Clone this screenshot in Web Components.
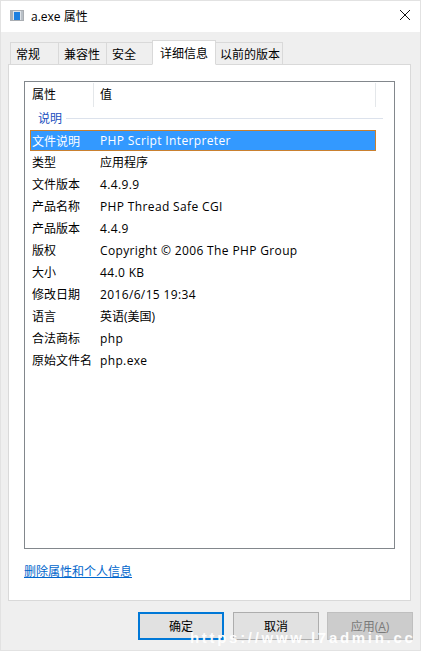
<!DOCTYPE html>
<html><head><meta charset="utf-8"><style>
html,body{margin:0;padding:0;background:#f0f0f0}
body{font:12px "Open Sans","Noto Sans CJK SC",sans-serif;color:#000}
</style></head><body>
<props-window>
  <title-bar slot="title">a.exe 属性</title-bar>
  <tab-strip slot="tabs">
    <tab-item w="48">常规</tab-item><tab-item w="48">兼容性</tab-item><tab-item w="46">安全</tab-item><tab-item w="64" active>详细信息</tab-item><tab-item w="67" last>以前的版本</tab-item>
  </tab-strip>
  <tab-panel slot="panel">
    <detail-list>
      <detail-row k="文件说明" v="PHP Script Interpreter" selected></detail-row>
      <detail-row k="类型" v="应用程序"></detail-row>
      <detail-row k="文件版本" v="4.4.9.9"></detail-row>
      <detail-row k="产品名称" v="PHP Thread Safe CGI"></detail-row>
      <detail-row k="产品版本" v="4.4.9"></detail-row>
      <detail-row k="版权" v="Copyright © 2006 The PHP Group"></detail-row>
      <detail-row k="大小" v="44.0 KB"></detail-row>
      <detail-row k="修改日期" v="2016/6/15 19:34"></detail-row>
      <detail-row k="语言" v="英语(美国)"></detail-row>
      <detail-row k="合法商标" v="php"></detail-row>
      <detail-row k="原始文件名" v="php.exe"></detail-row>
    </detail-list>
  </tab-panel>
  <dialog-button slot="buttons" kind="primary">确定</dialog-button>
  <dialog-button slot="buttons">取消</dialog-button>
  <dialog-button slot="buttons" kind="disabled">应用(<u>A</u>)</dialog-button>
</props-window>
<script>
function def(name,html,extra){
  customElements.define(name,class extends HTMLElement{
    constructor(){super();this.attachShadow({mode:'open'}).innerHTML=html;}
    connectedCallback(){extra&&extra.call(this,this.shadowRoot);}
  });
}
def('props-window',`<style>
:host{display:flex;flex-direction:column;position:relative;width:421px;height:651px;box-sizing:border-box;background:#efefef;border:1px solid #e2e2e2;overflow:hidden}
.btns{display:flex;gap:8px;padding:11px 7px 0 0;justify-content:flex-end}
.wm{position:absolute;left:189px;top:628px;font:bold 15px "Liberation Sans",sans-serif;letter-spacing:2.7px;color:#fff;white-space:nowrap;opacity:.95}
</style><slot name="title"></slot><slot name="tabs"></slot><slot name="panel"></slot><div class="btns"><slot name="buttons"></slot></div><div class="wm">https://www.l7admin.cc</div>`);
def('title-bar',`<style>
:host{display:flex;align-items:center;height:31px;background:#fff;padding:0 0 1px 9px;box-sizing:border-box;gap:6px;position:relative;color:#000}
svg{display:block}
.x{position:absolute;right:9px;top:8px}
</style><svg width="15" height="14" viewBox="0 0 15 14"><rect x=".5" y="1.5" width="13" height="10" fill="#dfe3e8" stroke="#a9adb2"/><rect x="1" y="2" width="2" height="9" fill="#a8b0b8"/><rect x="4" y="3" width="6" height="8" fill="#1c7fe0"/><rect x="11" y="2" width="2" height="9" fill="#b9c0c7"/></svg><slot></slot><svg class="x" width="12" height="12" viewBox="0 0 12 12"><path d="M1 1L11 11M11 1L1 11" stroke="#111" stroke-width="1" fill="none"/></svg>`);
def('tab-strip',`<style>
:host{display:flex;align-items:flex-end;height:33px;padding-left:9px;box-sizing:border-box;position:relative;z-index:1;margin-bottom:-1px}
</style><slot></slot>`);
def('tab-item',`<style>
:host{display:flex;align-items:center;height:23px;box-sizing:border-box;padding-left:5px;border:1px solid #d9d9d9;border-right:0;background:#efefef;white-space:nowrap;color:#000}
:host([last]){border-right:1px solid #d9d9d9;border-left:0;padding-left:4px}
:host([active]){height:25px;background:#fff;border-right:1px solid #d9d9d9;border-bottom-color:#fff;padding-left:7px}
</style><slot></slot>`,function(){this.style.width=this.getAttribute('w')+'px';});
def('tab-panel',`<style>
:host{display:flex;flex-direction:column;height:537px;box-sizing:border-box;margin:0 9px 0 7px;background:#fff;border:1px solid #d9d9d9;padding:16px 0 0 15px}
.link{margin-top:14px;color:#0066cc;text-decoration:underline;line-height:17px}
</style><slot></slot><div class="link">删除属性和个人信息</div>`);
def('detail-list',`<style>
:host{display:flex;flex-direction:column;height:468px;width:371px;box-sizing:border-box;border:1px solid #82878c;background:#fff;padding:1px 0 0 5px}
.head{display:flex;height:24px;align-items:center;color:#000}
.h1{width:64px;padding-left:2px;box-sizing:border-box;line-height:24px;border-right:1px solid #e4e7ea}
.h2{width:282px;padding-left:6px;box-sizing:border-box;line-height:24px;border-right:1px solid #e4e7ea}
.group{display:flex;align-items:center;height:23px;padding:0 0 1px 8px;box-sizing:border-box;gap:4px;color:#1a4fc0;margin-right:11px}
.group i{flex:1;height:1px;background:#dce2ec}
</style><div class="head"><div class="h1">属性</div><div class="h2">值</div></div><div class="group"><span>说明</span><i></i></div><slot></slot>`);
def('detail-row',`<style>
:host{display:flex;height:22px;width:346px;box-sizing:border-box;align-items:center;padding-left:2px;color:#000;white-space:nowrap}
:host([selected]){background:#3399ff;color:#fff;border:1px solid #c9802f;padding-left:1px;height:21px}
.k{width:68px;flex:none}
.latin{letter-spacing:.36px}
</style><span class="k"></span><span class="v"></span>`,function(r){const v=this.getAttribute('v');r.querySelector('.k').textContent=this.getAttribute('k');const e=r.querySelector('.v');e.textContent=v;if(!/[\u4e00-\u9fff]/.test(v))e.className='v latin';});
def('dialog-button',`<style>
:host{display:flex;align-items:center;justify-content:center;width:86px;height:28px;box-sizing:border-box;background:#e1e1e1;border:1px solid #adadad;color:#000}
:host([kind=primary]){border:2px solid #0078d7;margin-right:1px}
:host([kind=disabled]){background:#cccccc;border-color:#bfbfbf;color:#7a7a7a}
</style><slot></slot>`);
</script>
</body></html>
